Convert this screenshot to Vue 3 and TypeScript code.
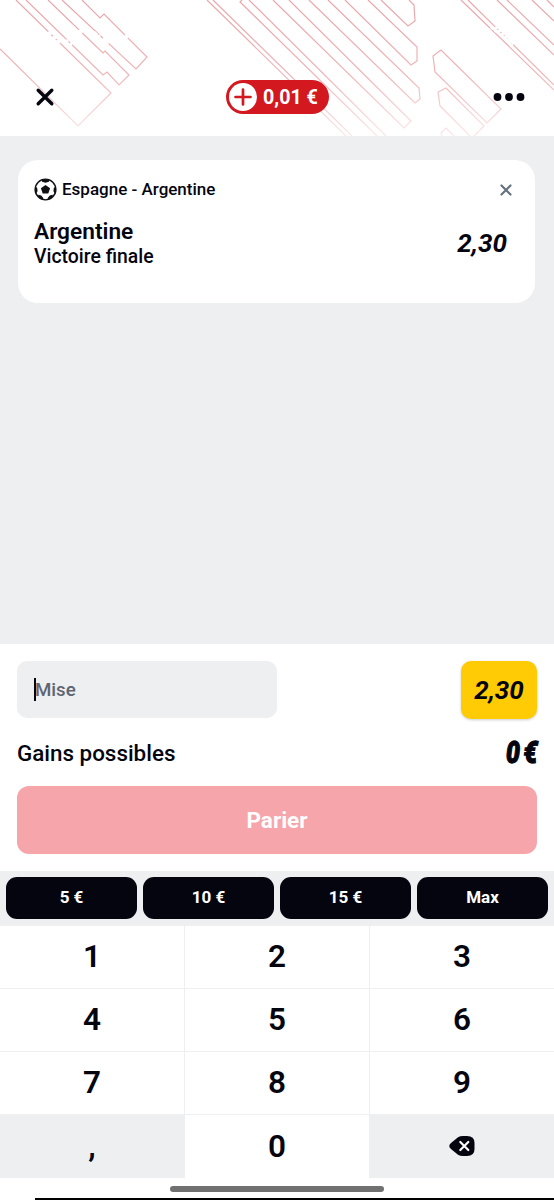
<script setup lang="ts">
interface Key {
  label: string
  kind: 'digit' | 'comma' | 'erase'
}

const odds = '2,30'
const quickStakes: string[] = ['5 €', '10 €', '15 €', 'Max']
const keys: Key[] = [
  ...['1', '2', '3', '4', '5', '6', '7', '8', '9'].map((label): Key => ({ label, kind: 'digit' })),
  { label: ',', kind: 'comma' },
  { label: '0', kind: 'digit' },
  { label: '', kind: 'erase' },
]

const stripes: string[] = [
  'M0 49L78 126L111 93L16 0',
  'M26 0L103 75L107 72L119 85L129 75L105 51L103 53L48 0',
  'M62 0L136 69L147 57L104 14L100 18L82 0',
  'M207 0L346 136',
  'M213 0L352 136',
  'M242 0L240 2L377 136',
  'M249 0L386 136',
  'M273 0L404 128L411 121L289 0',
  'M309 0L415 103L420 99L419 88L328 0',
  'M345 0L411 65L417 61L417 47L368 0',
  'M381 0L408 26L415 21L414 5L409 0',
  'M461 0L554 90',
  'M468 0L554 85',
  'M497 0L554 55',
  'M507 0L554 45',
  'M532 0L554 21',
  'M547 0L554 7',
  'M433 56L441 50L501 109L487 123L435 72Z',
  'M474 136L484 126L446 88L438 92L440 106L470 136',
  'M442 136L441 133L446 128L454 136',
]
</script>

<template>
  <main class="screen">
    <header class="header">
      <svg class="pattern" viewBox="0 0 554 136" width="554" height="136" fill="none">
        <defs>
          <linearGradient id="fade" gradientUnits="userSpaceOnUse" x1="0" y1="0" x2="0" y2="136">
            <stop offset="0" stop-color="#e9a5aa" />
            <stop offset="0.55" stop-color="#f1b4b7" />
            <stop offset="1" stop-color="#fae8e8" />
          </linearGradient>
        </defs>
        <path v-for="d in stripes" :key="d" :d="d" stroke="url(#fade)" stroke-width="1.2" />
        <path d="M48 32l3 3M53 36l3 3M57 40l3 3M66 40l2 2M70 43l2 2M79 30l3 3M94 32l3 3M99 35l1 1M103 38l6 5M125 35l3 3" stroke="#fff" stroke-width="3" />
        <path d="M491 27l22 18M495 27l18 16" stroke="#fff" stroke-width="3" stroke-dasharray="3 1.5" />
      </svg>
      <svg class="close" viewBox="0 0 20 20" width="20" height="20">
        <path d="M3.2 3.2l13.6 13.6M16.8 3.2L3.2 16.8" stroke="#050510" stroke-width="3.4" stroke-linecap="round" />
      </svg>
      <div class="balance">
        <svg viewBox="0 0 28 28" width="28" height="28">
          <circle cx="14" cy="14" r="14" fill="#fff" />
          <path d="M14 6.500v15M6.500 14h15" stroke="#d31820" stroke-width="2.7" stroke-linecap="round" />
        </svg>
        <span>0,01 €</span>
      </div>
      <svg class="more" viewBox="0 0 32 8" width="32" height="8" fill="#050510">
        <circle cx="4.5" cy="4" r="3.9" /><circle cx="16" cy="4" r="3.9" /><circle cx="27.5" cy="4" r="3.9" />
      </svg>
    </header>

    <section class="slip">
      <article class="card">
        <div class="match">
          <svg viewBox="0 0 24 24" width="23" height="23">
            <circle cx="12" cy="12" r="10.8" fill="#fff" stroke="#101014" stroke-width="1.5" />
            <path fill="#101014" d="M12 7.2l4.8 3.500-1.900 5.500H9.100l-1.900-5.500zM7.500 2.200Q12 .2 16.500 2.200L15.500 3.900L12 5L8.500 3.900zM22.500 8.500Q24 13 22 16.800L20.300 13.800L20.600 10.600zM1.500 8.500Q0 13 2 16.800L3.700 13.800L3.400 10.600zM4 19Q6 22 9.600 22.800L9.500 20.700L7.500 18.200L4.800 17.500zM20 19Q18 22 14.400 22.800L14.500 20.700L16.500 18.200L19.200 17.500z" />
          </svg>
          <span class="teams">Espagne - Argentine</span>
          <svg class="remove" viewBox="0 0 12 12" width="12" height="12">
            <path d="M1.500 1.500l9 9M10.500 1.500l-9 9" stroke="#667280" stroke-width="2.200" stroke-linecap="round" />
          </svg>
        </div>
        <div class="pick">
          <div>
            <div class="choice">Argentine</div>
            <div class="market">Victoire finale</div>
          </div>
          <span class="odds">{{ odds }}</span>
        </div>
      </article>
    </section>

    <section class="stake">
      <div class="stake-row">
        <div class="field"><i class="caret"></i><span>Mise</span></div>
        <div class="total">{{ odds }}</div>
      </div>
      <div class="gains"><span>Gains possibles</span><strong>0 €</strong></div>
      <button class="submit">Parier</button>
    </section>

    <nav class="quick">
      <button v-for="q in quickStakes" :key="q">{{ q }}</button>
    </nav>
    <section class="keys">
      <button v-for="k in keys" :key="k.kind + k.label" :class="k.kind">
        <svg v-if="k.kind === 'erase'" viewBox="0 0 26 20" width="26" height="20">
          <path d="M9 1.200Q11 0 14 0H18Q25.500 0 25.500 7V13Q25.500 20 18 20H14Q11 20 9 18.800L2 13Q-1.500 10 2 7Z" fill="#050510" />
          <path d="M11.300 6l8 8M19.300 6l-8 8" stroke="#fff" stroke-width="2.200" stroke-linecap="round" />
        </svg>
        <span v-else>{{ k.label }}</span>
      </button>
    </section>
    <footer class="system"><i class="handle"></i><i class="edge"></i></footer>
  </main>
</template>

<style>
body { margin: 0; }
</style>

<style scoped>
* { box-sizing: border-box; }
button { border: 0; padding: 0; margin: 0; font-family: inherit; }
.screen { width: 554px; height: 1200px; display: flex; flex-direction: column; overflow: hidden; background: #fff; color: #050510; font-family: Roboto, "Liberation Sans", sans-serif; }
.header { position: relative; height: 136px; flex: none; display: grid; grid-template-columns: 191px 103px 1fr; align-items: center; padding: 58px 29px 0 35px; }
.header > * { position: relative; }
.header .pattern { position: absolute; inset: 0; }
.balance { display: flex; align-items: center; width: 103px; height: 34px; padding-left: 3px; gap: 6px; border-radius: 17px; background: #d31820; color: #fff; font-size: 19.700px; font-weight: 700; white-space: nowrap; }
.balance svg { flex: none; }
.more { justify-self: end; }
.slip { height: 508px; flex: none; padding: 24px 18px; background: #eeeff1; }
.card { height: 143px; padding: 18px 23px 0 16px; border-radius: 20px; background: #fff; margin-right: 1px; }
.match { display: flex; align-items: center; height: 23px; gap: 5px; }
.teams { font-size: 17px; font-weight: 500; flex: 1; padding-bottom: 2px; }
.pick { display: flex; justify-content: space-between; align-items: center; margin-top: 18px; padding-right: 5px; }
.choice { font-size: 22.700px; line-height: 25px; font-weight: 600; }
.market { font-size: 19.400px; line-height: 25px; font-weight: 500; }
.odds, .total { font-size: 26px; font-weight: 700; font-style: italic; }
.odds { padding-bottom: 2px; }
.stake { height: 227px; flex: none; padding: 17px 17px 0; }
.stake-row { display: flex; justify-content: space-between; }
.field { width: 260px; height: 57px; display: flex; align-items: center; padding-left: 17px; border-radius: 10px; background: #eeeff1; color: #5d6572; font-size: 18.700px; font-weight: 500; }
.caret { width: 2px; height: 23px; margin-right: -1px; background: #050510; }
.total { width: 76px; height: 58px; display: grid; place-items: center; border-radius: 10px; background: #ffcb05; box-shadow: 0 1px 3px #0003; }
.gains { height: 67px; display: flex; align-items: center; justify-content: space-between; font-size: 22.400px; font-weight: 500; }
.gains span { padding-top: 1px; }
.gains strong { font-size: 31px; line-height: 34px; font-weight: 900; font-style: italic; transform: scaleX(.8); transform-origin: right; word-spacing: -3px; -webkit-text-stroke: 1.300px #050510; }
.submit { display: block; width: 520px; height: 68px; border-radius: 12px; background: #f6a5ab; color: #fff; font-size: 22.500px; font-weight: 700; }
.quick { height: 55px; flex: none; display: grid; grid-template-columns: repeat(4, 1fr); gap: 6px; padding: 6px 6px 7px; background: #eeeff1; }
.quick button { padding-bottom: 2px; border-radius: 11px; background: #050510; color: #fff; font-size: 17px; font-weight: 700; }
.keys { flex: none; display: grid; grid-template-columns: 185px 185px 184px; grid-template-rows: repeat(4, 63px); }
.keys button { padding-bottom: 1px; display: grid; place-items: center; border-right: 1px solid #eeeff1; border-bottom: 1px solid #eeeff1; background: #fff; color: #050510; font-size: 31.500px; font-weight: 600; }
.keys button:nth-child(3n) { border-right: 0; }
.keys button:nth-child(n + 10) { border-bottom: 0; padding-bottom: 1px; }
.keys .comma, .keys .erase { background: #eeeff1; }
.system { flex: 1; display: flex; flex-direction: column; align-items: center; justify-content: space-between; padding-top: 8px; }
.handle { width: 214px; height: 6px; border-radius: 3px; background: #707070; }
.edge { align-self: flex-end; width: 519px; height: 2px; background: #000; }
</style>
